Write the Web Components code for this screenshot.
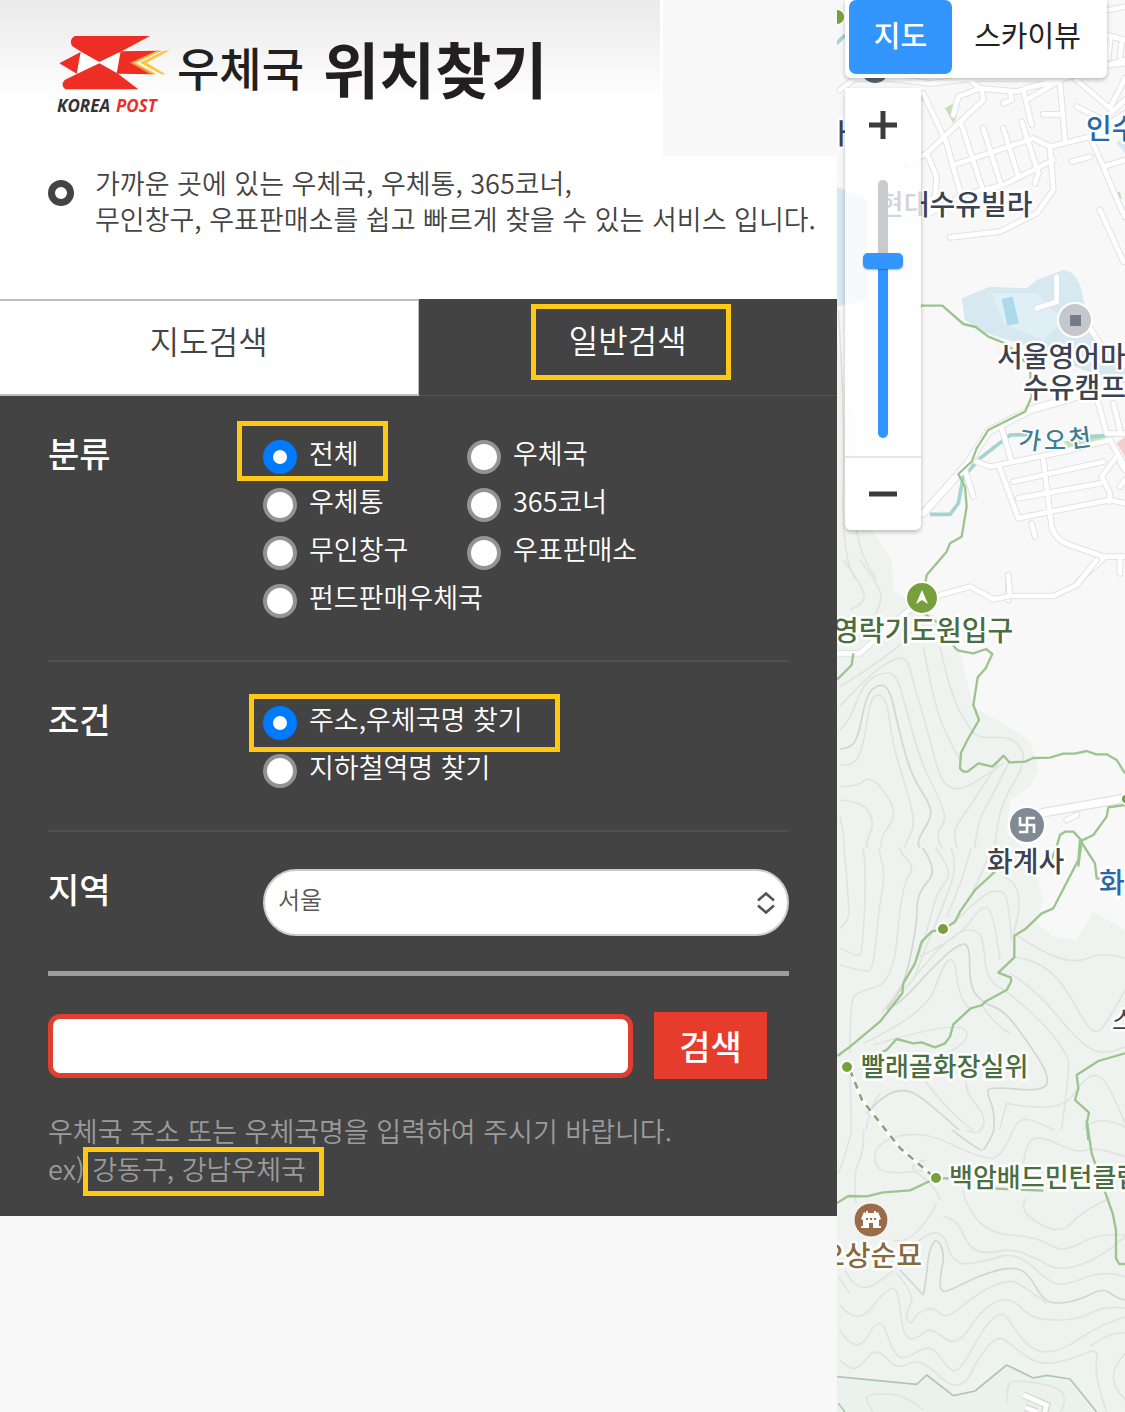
<!DOCTYPE html>
<html lang="ko">
<head>
<meta charset="utf-8">
<meta name="viewport" content="width=device-width, initial-scale=1">
<title>우체국 위치찾기</title>
<style>
  body {
    margin: 0;
    background: #f8f8f8;
    color: #444;
    font-family: "Noto Sans CJK KR", sans-serif;
    font-size: 27px;
    font-weight: 350;
  }
</style>
</head>
<body>
<post-finder></post-finder>

<template id="post-finder">
  <style>
    :host { display: flex; min-height: 100vh; }
    main { flex: 0 0 74.4%; min-width: 0; }
    map-view { flex: 1; min-width: 0; }
  </style>
  <main>
    <site-header></site-header>
    <intro-note>가까운 곳에 있는 우체국, 우체통, 365코너,<br>무인창구, 우표판매소를 쉽고 빠르게 찾을 수 있는 서비스 입니다.</intro-note>
    <search-tabs></search-tabs>
    <search-panel></search-panel>
  </main>
  <map-view></map-view>
</template>

<template id="site-header">
  <style>
    :host { display: flex; height: 156px; background: #fff; }
    .brand {
      flex: 1; display: flex; align-items: flex-start; box-sizing: border-box;
      padding: 34px 0 0 56px;
      background: linear-gradient(#ebebec, #f0f0f1 32px, #fff 100px);
      color: #231f20;
    }
    .side { width: 174px; margin-left: 3px; background: #f8f8f8; }
    svg { display: block; width: 116px; height: 84px; }
    h1 { display: flex; align-items: center; gap: 19px; margin: 0 0 0 5px; font-size: 61px; line-height: 64px; font-weight: 700; }
    small { font-size: 46px; font-weight: 500; padding-bottom: 4px; }
    text { font: italic 700 17px "Open Sans", sans-serif; }
  </style>
  <div class="brand">
    <svg viewBox="56 34 116 84" role="img" aria-label="Korea Post">
      <g transform="scale(.33333)">
        <path fill="#fff" d="M242 155L355 158L350 220L230 222Z"/>
        <g fill="#ee2e24">
          <path d="M224 108H450L372 150L298 186L246 157L216 138Q206 118 224 108Z"/>
          <path d="M178 190L242 156L230 221Z"/>
          <path d="M298 190L352 220L415 268H196Q180 256 194 240L232 221Z"/>
          <path d="M362 154L476 152L392 188L458 223L350 221Z"/>
        </g>
        <path fill="#f58a3c" d="M486 152L400 188L466 223H450L390 188L470 152Z"/>
        <path fill="#fcc63a" d="M510 151L440 188L497 223H484L420 188L490 153Z"/>
        <path fill="#fcc63a" d="M480 154L408 188L470 223H462L400 188L470 154Z"/>
      </g>
      <text x="57" y="112" fill="#333">KOREA</text>
      <text x="116" y="112" fill="#ee2e24">POST</text>
    </svg>
    <h1><small>우체국</small><span>위치찾기</span></h1>
  </div>
  <div class="side"></div>
</template>

<template id="intro-note">
  <style>
    :host { display: flex; height: 143px; background: #fff; line-height: 36px; padding-left: 48px; box-sizing: border-box; }
    i { box-sizing: border-box; flex: none; width: 26px; height: 26px; margin: 24px 21px 0 0; border: 7px solid #444; border-radius: 50%; }
    p { margin: 9px 0 0; white-space: nowrap; }
  </style>
  <i></i><p><slot></slot></p>
</template>

<template id="search-tabs">
  <style>
    :host { display: grid; grid-template-columns: 1fr 1fr; height: 97px; background: #434343; }
    button {
      appearance: none; font: inherit; font-size: 32px; line-height: 48px; margin: 0; cursor: pointer;
      border: 0 solid #bcbcbc; padding: 0 0 16px; border-radius: 0;
    }
    .map { background: #fff; color: #444; border-width: 2px 1px 2px 0; }
    .general { background: none; color: #fff; border-bottom: 1px solid #555; }
  </style>
  <button class="map" type="button">지도검색</button>
  <button class="general" type="button"><mark-frame style="--top:11px;--bottom:17px;--left:38px;--right:44px">일반검색</mark-frame></button>
</template>

<template id="mark-frame">
  <style>
    :host { position: relative; display: inline-block; }
    i {
      position: absolute; pointer-events: none; border: 5px solid #ffc814;
      top: calc(0px - var(--top)); bottom: calc(0px - var(--bottom));
      left: calc(0px - var(--left)); right: calc(0px - var(--right));
    }
  </style>
  <slot></slot><i></i>
</template>

<template id="field-row">
  <style>
    :host { display: grid; grid-template-columns: 215px 1fr; border-bottom: 2px solid #505050; padding: 37px 0 35px; }
    .name { font-size: 34px; line-height: 40px; font-weight: 500; color: #fff; }
  </style>
  <div class="name"><slot name="name"></slot></div>
  <div><slot></slot></div>
</template>

<template id="choice-group">
  <style>
    :host { display: grid; grid-template-columns: 204px 1fr; color: #fff; }
    label { display: flex; align-items: center; gap: 12px; height: 48px; white-space: nowrap; }
    label span { line-height: 40px; padding-bottom: 8px; }
    label.long { grid-column: 1 / -1; }
    input {
      appearance: none; box-sizing: border-box; flex: none; margin: 0; width: 34px; height: 34px;
      border: 4px solid #939393; border-radius: 50%; background: #fff;
    }
    input:checked { border: 10px solid #007aff; }
  </style>
</template>

<template id="search-panel">
  <style>
    :host { display: block; background: #434343; padding: 0 48px 28px; }
    .area { border-bottom: 5px solid #9e9e9e; }
    .select { position: relative; display: block; }
    select {
      appearance: none; box-sizing: border-box; display: block; width: 100%; height: 67px;
      padding: 0 48px 8px 13px; border: 2px solid #ccc; border-radius: 34px; background: #fff;
      font: inherit; font-size: 24px; color: #555;
    }
    .select svg { position: absolute; right: 12px; top: 22px; width: 22px; height: 24px; pointer-events: none; }
    form { display: flex; gap: 21px; align-items: center; margin: 36px 22px 0 0; }
    input {
      flex: 1; min-width: 0; box-sizing: border-box; height: 64px; border: 5px solid #df3e31; border-radius: 12px;
      background: #fff; font: inherit; padding: 0 12px; margin: 0;
    }
    form button {
      width: 113px; height: 67px; border: 0; padding: 0; border-radius: 0; background: #e63c2c; color: #fff;
      font: inherit; font-size: 34px; font-weight: 500;
    }
    p { margin: 33px 0 0; line-height: 38px; color: #9b9b9b; }
  </style>
  <field-row>
    <span slot="name">분류</span>
    <choice-group label="분류" options="전체|우체국|우체통|365코너|무인창구|우표판매소|펀드판매우체국*" frame="--top:12px;--bottom:0px;--left:26px;--right:29px"></choice-group>
  </field-row>
  <field-row>
    <span slot="name">조건</span>
    <choice-group label="조건" options="주소,우체국명 찾기*|지하철역명 찾기*" frame="--top:5px;--bottom:5px;--left:14px;--right:37px"></choice-group>
  </field-row>
  <field-row class="area">
    <label slot="name" for="area">지역</label>
    <span class="select">
      <select id="area"><option>서울</option><option>부산</option><option>대구</option></select>
      <svg viewBox="0 0 22 24" fill="none" stroke="#555" stroke-width="2.6"><path d="M3 9.500L11 2.500L19 9.500M3 14.500L11 21.500L19 14.500"/></svg>
    </span>
  </field-row>
  <form>
    <input type="text" aria-label="검색어">
    <button type="button">검색</button>
  </form>
  <p>우체국 주소 또는 우체국명을 입력하여 주시기 바랍니다.<br>ex) <mark-frame style="--top:3px;--bottom:8px;--left:9px;--right:18px">강동구, 강남우체국</mark-frame></p>
</template>

<template id="zoom-control">
  <style>
    :host { display: flex; flex-direction: column; width: 76px; border-radius: 6px; box-shadow: 0 2px 4px rgba(0,0,0,.25); }
    button { border: 0; padding: 0; margin: 0; height: 74px; background: #fff; display: grid; place-items: center; }
    button:first-child { border-radius: 6px 6px 0 0; border-bottom: 2px solid #e6e6e6; }
    button:last-child { border-radius: 0 0 6px 6px; border-top: 2px solid #e6e6e6; }
    svg { width: 30px; height: 30px; }
    .rail { background: rgba(255,255,255,.78); padding: 18px 0; }
    input {
      appearance: none; display: block; margin: 0 auto; width: 40px; height: 258px;
      writing-mode: vertical-lr; direction: rtl; background: none;
    }
    input::-webkit-slider-runnable-track {
      width: 10px; height: 258px; margin: 0 15px; border-radius: 5px;
      background: linear-gradient(#c9cacb 80px, #3396ff 80px);
    }
    input::-webkit-slider-thumb {
      appearance: none; width: 40px; height: 16px; margin-left: -15px; border-radius: 5px;
      background: #3396ff; box-shadow: 0 1px 2px rgba(0,0,0,.3);
    }
  </style>
  <button type="button" aria-label="확대"><svg viewBox="0 0 30 30" stroke="#3b3b3b" stroke-width="5"><path d="M1 15H29M15 1V29"/></svg></button>
  <div class="rail"><input type="range" min="0" max="10" value="7" aria-label="지도 확대 수준"></div>
  <button type="button" aria-label="축소"><svg viewBox="0 0 30 30" stroke="#3b3b3b" stroke-width="5"><path d="M1 15H29"/></svg></button>
</template>

<template id="map-type">
  <style>
    :host { display: flex; width: 262px; height: 78px; box-sizing: border-box; padding: 0 4px 4px; background: #fff; border-radius: 0 0 6px 6px; box-shadow: 0 2px 4px rgba(0,0,0,.25); }
    button { font: inherit; font-size: 29px; line-height: 68px; padding: 0 0 6px; border: 0; border-radius: 7px; background: none; color: #222; flex: 1; font-weight: 400; white-space: nowrap; }
    .on { flex: 0 0 103px; background: #3396ff; color: #fff; font-weight: 500; }
  </style>
  <button class="on" type="button">지도</button><button type="button">스카이뷰</button>
</template>

<template id="map-view">
  <style>
    :host { display: block; position: relative; overflow: hidden; background: #f8f8f8; }
    .canvas { position: absolute; inset: 0; width: 100%; height: 100%; }
    map-type { position: absolute; left: 8px; top: 0; }
    zoom-control { position: absolute; left: 8px; top: 88px; }
    .labels text { font-size: 28px; font-weight: 500; fill: #3c4350; stroke: #fff; stroke-width: 5px; stroke-linejoin: round; paint-order: stroke; }
    .labels .sm { font-size: 26px; }
    .labels .green { fill: #4a6f3f; }
    .labels .blue { fill: #2568ad; }
    .labels .brown { fill: #8a6a3c; }
    .labels .stream { fill: #3f7e92; font-size: 24px; stroke-width: 3px; }
    .contour { fill: none; stroke: #e0e3e1; stroke-width: 5; stroke-linejoin: round; }
    .contour .bold { stroke: #d2d5d3; }
    .trail { fill: none; stroke: #9cc48e; stroke-width: 7; stroke-linejoin: round; }
    .edge { fill: none; stroke: #e2e2e2; stroke-linejoin: round; stroke-linecap: round; }
    .road { fill: none; stroke: #fff; stroke-linejoin: round; stroke-linecap: round; }
    .w1 { stroke-width: 20; }
    .w2 { stroke-width: 26; }
  </style>
  <svg class="canvas" viewBox="837 0 288 1412" preserveAspectRatio="xMinYMin slice" role="img" aria-label="지도">
    <defs>
      <clipPath id="clip-upper"><path d="M830 560H1125V848H830Z"/></clipPath>
      <clipPath id="clip-middle"><path d="M830 848H1125V1130H830Z"/></clipPath>
      <clipPath id="clip-lower"><path d="M830 1130H1125V1412H830Z"/></clipPath>
    </defs>

    <!-- hills, water and parks -->
    <g transform="translate(830 0) scale(.33333)">
      <path fill="#eff3f0" d="M0 900L60 1250L120 1580L185 1680L190 1770L320 1850L390 1960L430 2120L500 2160L600 2220L625 2310L600 2360L540 2400L530 2500L600 2560L640 2700L620 2770L670 2810L740 2820L790 2735L885 2790V4236H0Z"/>
      <path fill="#ebf2ed" d="M0 4130L260 4153L290 4125L370 4187L435 4173L530 4095L610 4134L720 4137L800 4260H0Z"/>
      <path fill="#d7e8f1" d="M20 560L110 600V900L20 920ZM395 895L480 860L590 865L620 840L700 810Q750 815 760 900L790 990L885 1110V1150L760 1110L600 1040L470 1000L405 960ZM860 430L885 400V460Z"/>
      <path fill="#e0eef5" d="M485 880L620 880L700 960L640 1020L520 970Z"/>
      <path fill="#abdaec" d="M515 897L548 890L567 970L532 977Z"/>
      <path fill="#c7dfb7" d="M345 325L370 310L380 350L370 370ZM845 580L870 575L875 597L850 600ZM275 285L290 295L275 305ZM700 1325L825 1305V1325L720 1345Z"/>
      <path fill="#f3cfcf" d="M860 1330L885 1310V1370Z"/>
      <path fill="none" stroke="#a5d3cf" stroke-width="11" d="M300 1543H360L385 1510L400 1430L450 1375L540 1305L600 1304M780 1310L885 1302M20 130L45 105"/>
    </g>

    <!-- streets: grey edge below, white surface above -->
    <g transform="translate(830 0) scale(.33333)">
      <path class="edge w1" d="M30 270L75 235H180L300 250L430 235L700 235L885 180M280 280L350 430L390 575M290 460L460 300L455 270L420 240M370 345L385 290L450 265L560 275L600 262L690 240L760 200M230 495L290 460L320 530L315 590L230 650M395 375L455 560M460 385L510 545M520 385L565 530M575 365L625 520L615 550M370 495L610 415L660 440L780 410L885 380M660 440L670 570L620 640L510 695L360 712M670 480L520 555L400 585L300 640M580 270L605 375M590 300L700 235M640 343H690M690 250L705 420M740 240L840 325L885 235M740 320L820 360L885 300M885 340L780 410L820 500L870 620L885 650M725 485L780 470M820 500L885 480M810 630L880 785M770 90L885 120M760 200L885 190M840 120L835 175M875 130L870 170M835 30L885 20M520 310L545 300L540 275"/>
      <path class="road" stroke-width="14" d="M30 270L75 235H180L300 250L430 235L700 235L885 180M280 280L350 430L390 575M290 460L460 300L455 270L420 240M370 345L385 290L450 265L560 275L600 262L690 240L760 200M230 495L290 460L320 530L315 590L230 650M395 375L455 560M460 385L510 545M520 385L565 530M575 365L625 520L615 550M370 495L610 415L660 440L780 410L885 380M660 440L670 570L620 640L510 695L360 712M670 480L520 555L400 585L300 640M580 270L605 375M590 300L700 235M640 343H690M690 250L705 420M740 240L840 325L885 235M740 320L820 360L885 300M885 340L780 410L820 500L870 620L885 650M725 485L780 470M820 500L885 480M810 630L880 785M770 90L885 120M760 200L885 190M840 120L835 175M875 130L870 170M835 30L885 20M520 310L545 300L540 275"/>
    </g>
    <g transform="translate(830 280) scale(.33333)">
      <path class="edge w2" d="M280 700L410 555L475 455L600 390L740 350L885 330"/>
      <path class="edge w1" d="M680 -10V65L620 85M770 130L810 190M515 445L545 545M440 545L480 560L700 515L840 480L885 560M510 565L565 715L660 695L840 660L885 670M640 540L665 740Q675 780 720 795L820 830H885M550 605L820 545M565 655L810 610M860 530L815 590L840 640L838 665M405 570L430 650M605 730L615 770M805 370L830 460H885M850 370L870 450M870 545L885 570M885 600L870 620M870 835V880M820 835L745 905M535 885V960"/>
      <path class="road" stroke-width="20" d="M280 700L410 555L475 455L600 390L740 350L885 330"/>
      <path class="road" stroke-width="14" d="M680 -10V65L620 85M770 130L810 190M515 445L545 545M440 545L480 560L700 515L840 480L885 560M510 565L565 715L660 695L840 660L885 670M640 540L665 740Q675 780 720 795L820 830H885M550 605L820 545M565 655L810 610M860 530L815 590L840 640L838 665M405 570L430 650M605 730L615 770M805 370L830 460H885M850 370L870 450M870 545L885 570M885 600L870 620M870 835V880M820 835L745 905M535 885V960"/>
    </g>
    <g transform="translate(830 560) scale(.33333)">
      <path class="edge" stroke-width="20" d="M20 280H90L230 155L330 105L420 80L490 118L540 108H670L740 75L800 0M535 45L540 108M710 780L740 765"/>
      <path class="road" stroke-width="14" d="M20 280H90L230 155L330 105L420 80L490 118L540 108H670L740 75L800 0M535 45L540 108M710 780L740 765"/>
      <path class="edge" stroke-width="30" d="M640 758L885 715"/>
      <path class="road" stroke-width="22" d="M640 758L885 715"/>
    </g>

    <!-- contour lines -->
    <g class="contour">
      <g transform="translate(830 280) scale(.33333)"><path d="M25 90L45 400L35 850L80 900M80 750L90 830L140 900"/></g>
      <g clip-path="url(#clip-upper)"><g transform="translate(830 560) scale(.33333)">
        <path d="M40 0L100 80L105 130L60 150M90 0L150 80L155 130L120 200M30 380L130 320L230 240M30 440L110 350L200 290L235 300L250 370L290 500L330 660L370 690L420 680L520 610"/>
        <path d="M30 510L60 480L100 370L160 335L200 345L230 450L270 600L330 720L350 780L310 835L360 900M30 615L70 620L100 560L120 420L145 400L170 420L190 560L215 640L240 720L255 800L225 850L210 900M30 680L80 680L125 645L195 740L185 790L145 840L160 900M30 720L100 725L135 790L105 850L110 900M30 770L45 830L45 900"/>
        <path d="M280 260L310 420L350 530L390 600M330 260L360 400L420 510L450 535L540 530L580 570L580 620L520 720L500 800L490 900M540 600L480 720L440 790L430 900M510 600L420 740L355 830L400 900"/>
        <path class="bold" d="M30 567L60 565L85 530L110 400L150 370L180 390L200 480L240 640L305 740L300 780L262 840L270 870L300 900"/>
      </g></g>
      <g clip-path="url(#clip-middle)"><g transform="translate(830 840) scale(.33333)">
        <path d="M40 0L60 210L50 250L30 265M95 0L110 60L98 340L80 350L30 325M145 0L150 50L165 100L145 220L130 390L100 395L30 375M200 0L210 40L255 80L215 140L190 430L80 455L60 490L60 640M300 0L350 70L360 110L320 160L300 240L270 340L230 420L155 520"/>
        <path d="M350 0L390 60L330 220L300 290L250 420M430 0L400 120L350 230M490 0L460 100L430 150M520 110L595 135L550 280M370 250L460 160L510 150L535 170L545 300M270 350L390 290L450 200L490 205L510 360M170 520L290 360L390 270L440 270L460 300L470 420L540 460L650 560L710 640L720 690L690 900"/>
        <path d="M100 610L290 520L340 370L375 350L385 470L420 510M550 350L620 360L700 430L770 560L800 580L830 550L885 450M550 280L640 340L740 370L820 335L885 355M540 400L620 450L740 600L820 650L885 620M130 615L380 540L430 600L350 640M450 490L500 560L540 580"/>
        <path d="M60 700L65 900M105 900L110 820L150 760M270 700L310 760L410 860L450 880L470 830L400 750L410 700M530 790L690 820L760 720L800 700L840 740L885 850M530 790L500 900M545 900L550 850L600 830L690 880M740 900L780 810L885 860"/>
        <path class="bold" d="M260 0L330 85L260 160L262 250L220 450L155 520L220 480L300 390L380 315L420 310L418 440L460 490L520 510L590 600L660 710L640 755L480 740L470 760L497 820L490 900M110 820L160 765L230 745L300 790L420 900"/>
      </g></g>
      <g clip-path="url(#clip-lower)"><g transform="translate(830 1120) scale(.33333)">
        <path d="M100 0L105 90L68 160L78 250M70 0L60 70L25 160M290 150L160 170L125 110L160 60L240 40L320 50L440 110L520 120L560 0M350 0L420 40L460 35L470 0M330 240L320 200L220 130L290 120M340 290L380 295L420 390L480 400L540 385L620 415L690 455L820 410L885 350M400 210L400 240L470 340L620 350L700 400L800 340L885 345M590 235L560 270L690 348L760 270L840 235M580 130L590 60L640 50L740 100L800 80L885 110"/>
        <path d="M25 470L60 520M45 450L80 525L190 460L270 350L340 330L370 440L480 420L540 400L600 430L650 480L700 500L820 450L885 470M190 360L250 380L320 250M30 555L80 620L175 500L205 510L215 620L235 660L270 650L300 620L380 685L460 560L540 530L600 590L650 600L740 600L830 555L885 565M200 460L250 520L240 560L225 590L245 615L260 580L310 560L350 600L440 520L530 480L570 490L650 550"/>
        <path d="M30 630L80 710L150 580L190 700L225 720L300 670L350 740L380 760L420 700L470 610L520 570L560 640L620 700L700 690L800 620L885 590M30 720L60 750L90 740L140 680L200 750L250 720L300 740L360 800L410 790L440 720L505 640L560 690L630 735L720 720L810 680L790 760L830 876M885 640L850 630L780 680M885 700L850 740L850 800L885 840M130 876L105 840L120 820L230 825L280 870M530 850L530 790L560 780L690 800L710 850L690 876"/>
        <path class="bold" d="M460 90L490 50L500 0M330 0L400 60L455 92M280 525L210 450M280 525L290 470L295 400L318 350L345 400L328 480L335 523L400 490L480 455L560 440L600 470L640 540L680 552L750 540L820 503L860 535L885 540"/>
        <path stroke="#adc8ae" d="M20 770L260 793L290 765L370 827L435 813L530 735L610 774L650 766L720 777L800 876M25 850L45 876"/>
      </g></g>
    </g>
    <g transform="translate(830 1120) scale(.33333)" fill="none">
      <path stroke="#d5d5d5" stroke-width="22" d="M580 825L650 855L642 885M585 862L620 876"/><path stroke="#fff" stroke-width="14" d="M580 825L650 855L642 885M585 862L620 876"/>
    </g>

    <!-- trails -->
    <g class="trail">
      <path transform="translate(830 280) scale(.33333)" d="M270 77H337L400 132L437 141L475 170L530 192L600 260L605 350L585 395L475 450L440 505L425 545L385 582L405 620L410 680L395 770L360 790L350 815L290 885L285 915"/>
      <path transform="translate(830 560) scale(.33333)" d="M280 160L320 185L375 263L385 272L430 280L468 267L487 282L467 325L443 352L430 435L447 480L415 535L393 578L390 625L400 635H413L445 610L487 620L521 587L538 607L585 605L610 594L660 593L700 581H735L770 573L798 583H830L860 600L885 640M70 280L65 315L22 358M885 735L835 742L830 770L790 825L755 842L730 815H705L690 825L680 860L660 910M755 842L745 920"/>
      <path transform="translate(830 840) scale(.33333)" d="M495 95L435 150L390 215L375 245L345 265L305 275L275 305L255 370L220 430L217 460L150 545L60 620L22 648M750 0L745 60L670 205L635 220L585 268L553 287V352L505 398L543 413V425L530 450L465 485L457 495L422 505L370 553L360 590L345 610L315 622L275 607L250 610L200 597L170 630L120 650M750 0L795 70L800 115L830 120M885 640L805 663L740 705L745 745L735 780L777 818L770 850L775 900"/>
      <path transform="translate(830 1120) scale(.33333)" d="M20 250L55 228L110 229L160 217L240 211L300 183L340 175H360M770 0L785 100L830 230L848 280L858 330V415L868 432H885M480 205L640 212"/>
    </g>
    <path fill="none" stroke="#fff" stroke-width="4" d="M850 1070L862 1100L900 1148L935 1178"/>
    <path fill="none" stroke="#8aa27e" stroke-width="2.600" stroke-dasharray="7 6" d="M850 1070L862 1100L900 1148L935 1178"/>
    <g fill="#77a03c" stroke="#fff" stroke-width="2">
      <circle cx="943" cy="929" r="6"/><circle cx="847" cy="1067" r="6"/><circle cx="936" cy="1178" r="6"/><circle cx="1126" cy="799" r="5"/><circle cx="837" cy="17" r="8"/>
      <circle cx="922" cy="598" r="16"/>
    </g>
    <path fill="#fff" d="M922 590L928 604L922 600L916 604Z"/>
    <circle cx="875" cy="69" r="14" fill="#5a6472"/>
    <circle cx="1075" cy="320" r="17" fill="#c6c7cc" stroke="#fff" stroke-width="2"/><path fill="#727d88" d="M1070 315H1081V326H1070Z"/>
    <circle cx="1027" cy="825" r="18" fill="#7f8a94" stroke="#fff" stroke-width="2"/>
    <path fill="none" stroke="#fff" stroke-width="2.600" d="M1019 832H1027V818H1035M1020 817V825H1034V833"/>
    <circle cx="871" cy="1220" r="17" fill="#9b6c4b" stroke="#fff" stroke-width="1"/>
    <path fill="#fff" d="M861 1219L864 1212L866 1213V1211H868V1213H874V1211H876V1213L878 1212L881 1219L879 1220V1226H881V1228H861V1226H863V1220Z"/>
    <path fill="#9b6c4b" d="M869 1228V1223H873V1228ZM866 1218H868V1220H866ZM870 1218H872V1220H870ZM874 1218H876V1220H874Z"/>

    <g class="labels">
      <text x="829" y="144">ㅏ</text>
      <text x="905" y="144">ㅣ</text>
      <text x="878" y="215">현대수유빌라</text>
      <text class="blue" x="1086" y="139">인수</text>
      <text x="997" y="367">서울영어마</text>
      <text x="1023" y="398">수유캠프</text>
      <text class="stream" transform="translate(1018 447) rotate(8)">가</text>
      <text class="stream" x="1044" y="449">오</text>
      <text class="stream" transform="translate(1070 448) rotate(-7)">천</text>
      <text class="green" x="833" y="641">영락기도원입구</text>
      <text x="987" y="872">화계사</text>
      <text class="blue" x="1099" y="893">화</text>
      <text class="sm" x="1112" y="1030" style="font-weight:400">스</text>
      <text class="green sm" x="861" y="1076">빨래골화장실위</text>
      <text class="green sm" x="949" y="1187">백암배드민턴클럽</text>
      <text class="brown" x="819" y="1266">오상순묘</text>
    </g>
  </svg>
  <map-type></map-type>
  <zoom-control></zoom-control>
</template>

<script>
  // Registers an element whose shadow root is cloned from the template of the same name.
  function define(name, setup) {
    customElements.define(name, class extends HTMLElement {
      constructor() {
        super();
        const root = this.attachShadow({ mode: 'open' });
        root.append(document.getElementById(name).content.cloneNode(true));
      }
      connectedCallback() { if (setup) setup(this); }
    });
  }

  // Options are separated by "|"; a trailing "*" lets an option span the full row.
  define('choice-group', host => {
    const root = host.shadowRoot;
    if (root.querySelector('label')) return;
    host.setAttribute('role', 'radiogroup');
    host.setAttribute('aria-label', host.getAttribute('label'));
    host.getAttribute('options').split('|').forEach((raw, i) => {
      const label = document.createElement('label');
      const input = document.createElement('input');
      const text = document.createElement('span');
      if (raw.endsWith('*')) label.className = 'long';
      input.type = 'radio';
      input.name = 'choice';
      input.checked = i === 0;
      text.textContent = raw.replace('*', '');
      label.append(input, text);
      if (i === 0) {
        const frame = document.createElement('mark-frame');
        frame.setAttribute('style', host.getAttribute('frame'));
        frame.append(label);
        const cell = document.createElement('div');
        if (raw.endsWith('*')) cell.style.gridColumn = '1 / -1';
        cell.style.display = 'flex';
        cell.append(frame);
        root.append(cell);
      } else root.append(label);
    });
  });

  // Contours are stored as polylines and rounded off through the midpoints of their segments.
  function smooth(d) {
    return d.split('M').filter(Boolean).map(part => {
      const p = part.split('L').map(s => s.trim().split(/\s+/).map(Number));
      let out = `M${p[0]}`;
      for (let i = 1; i < p.length - 1; i++) {
        const end = i === p.length - 2 ? p[i + 1] : [(p[i][0] + p[i + 1][0]) / 2, (p[i][1] + p[i + 1][1]) / 2];
        out += `Q${p[i]} ${end}`;
      }
      return p.length === 2 ? out + `L${p[1]}` : out;
    }).join('');
  }
  define('map-view', host => {
    host.shadowRoot.querySelectorAll('.contour path').forEach(path => {
      if (!path.hasAttribute('stroke')) path.setAttribute('d', smooth(path.getAttribute('d')));
    });
  });

  ['mark-frame', 'field-row', 'site-header', 'intro-note', 'search-tabs', 'search-panel',
   'zoom-control', 'map-type', 'post-finder'].forEach(name => define(name));
</script>
</body>
</html>
